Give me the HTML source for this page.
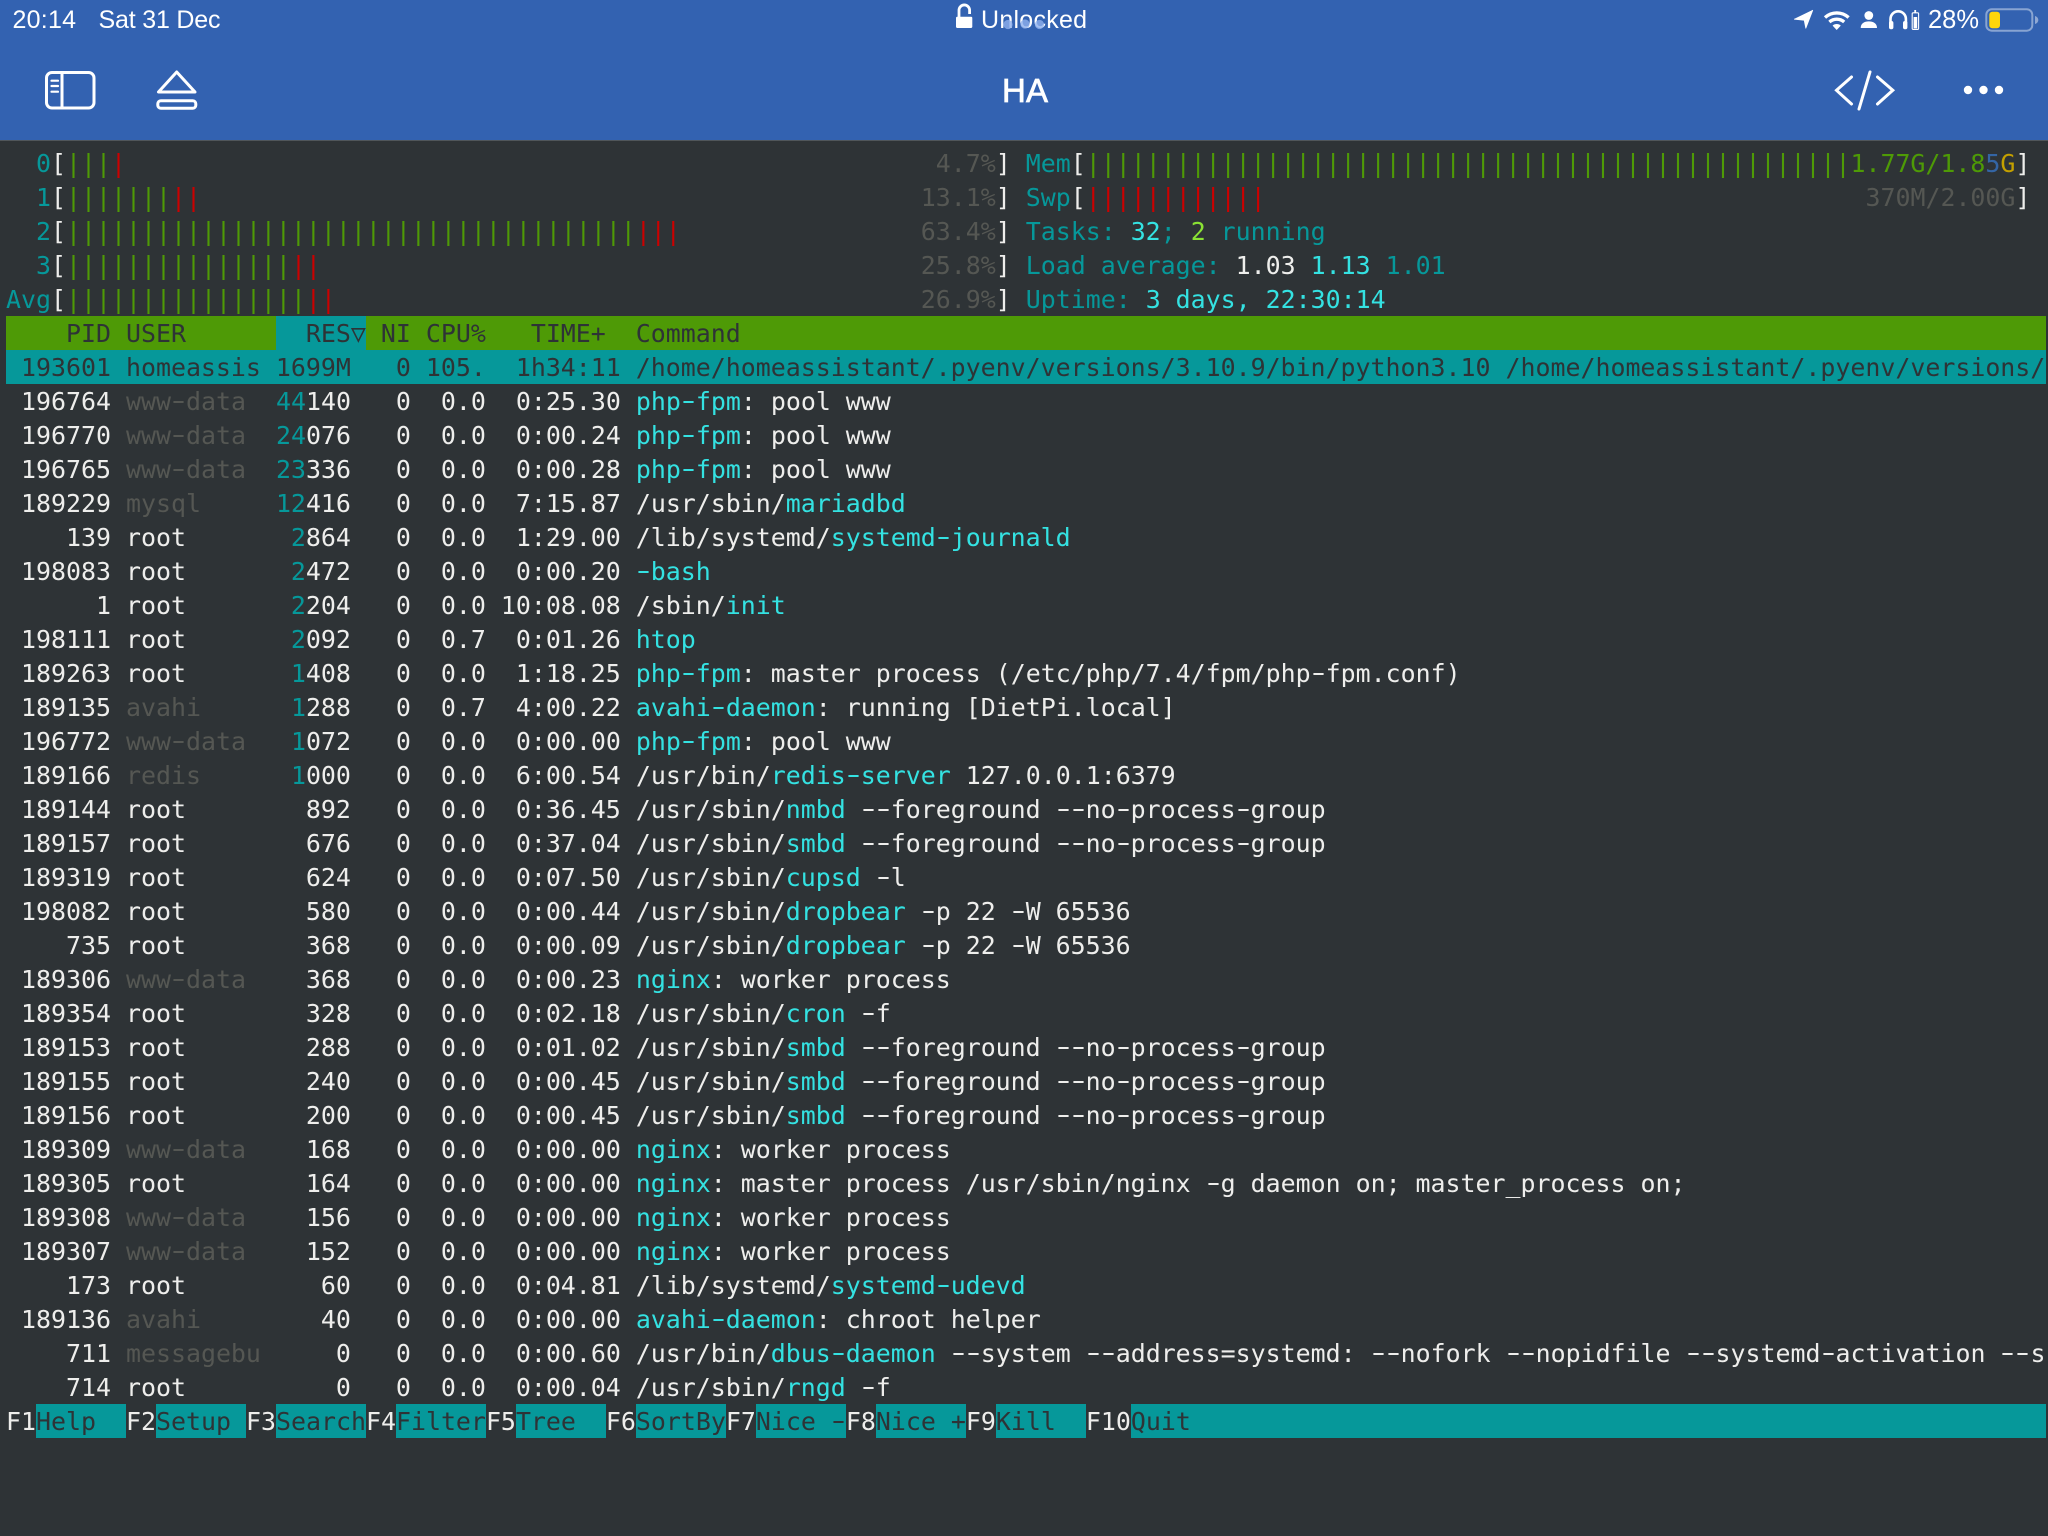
<!DOCTYPE html>
<html lang="en"><head><meta charset="utf-8"><title>HA</title>
<style>
html,body{margin:0;padding:0;background:#2e3336;width:2048px;height:1536px;overflow:hidden}
#bar{position:absolute;left:0;top:0;width:2048px;height:140px;background:#3362b1;border-bottom:1px solid #50565a}
svg{position:absolute;left:0;top:0}
pre{position:absolute;left:6px;top:147px;width:2040px;height:1292px;margin:0;overflow:hidden;color:#eeeeec;
font:24.92px/34px "DejaVu Sans Mono",monospace;white-space:pre;font-variant-ligatures:none}
i{font-style:normal}
u{text-decoration:none;display:inline-block;transform:translateY(-1px) scaleX(1.6)}
.t{color:#06989a}.c{color:#34e2e2}.g{color:#4e9a06}.r{color:#cc0000}.y{color:#555753}.l{color:#8ae234}.b{color:#3465a4}.o{color:#c4a000}
b{font-weight:normal;color:#2e3336}
.k{position:absolute;height:34px;background:#06989a}
.n{background:#4e9a06}
</style></head><body>
<div id="bar"></div>
<div class="k n" style="left:6px;top:316px;width:270px"></div>
<div class="k" style="left:276px;top:316px;width:90px"></div>
<div class="k n" style="left:366px;top:316px;width:1680px"></div>
<div class="k" style="left:6px;top:350px;width:2040px"></div>
<div class="k" style="left:36px;top:1404px;width:90px"></div>
<div class="k" style="left:156px;top:1404px;width:90px"></div>
<div class="k" style="left:276px;top:1404px;width:90px"></div>
<div class="k" style="left:396px;top:1404px;width:90px"></div>
<div class="k" style="left:516px;top:1404px;width:90px"></div>
<div class="k" style="left:636px;top:1404px;width:90px"></div>
<div class="k" style="left:756px;top:1404px;width:90px"></div>
<div class="k" style="left:876px;top:1404px;width:90px"></div>
<div class="k" style="left:996px;top:1404px;width:90px"></div>
<div class="k" style="left:1131px;top:1404px;width:915px"></div>
<pre>  <i class="t">0</i>[<i class="g">|||</i><i class="r">|</i>                                                      <i class="y">4.7%</i>] <i class="t">Mem</i>[<i class="g">|||||||||||||||||||||||||||||||||||||||||||||||||||1.77G/1.8</i><i class="b">5</i><i class="o">G</i>]
  <i class="t">1</i>[<i class="g">|||||||</i><i class="r">||</i>                                                <i class="y">13.1%</i>] <i class="t">Swp</i>[<i class="r">||||||||||||</i>                                        <i class="y">370M/2.00G</i>]
  <i class="t">2</i>[<i class="g">||||||||||||||||||||||||||||||||||||||</i><i class="r">|||</i>                <i class="y">63.4%</i>] <i class="t">Tasks: </i><i class="c">32</i><i class="t">;</i> <i class="l">2</i><i class="t"> running</i>
  <i class="t">3</i>[<i class="g">|||||||||||||||</i><i class="r">||</i>                                        <i class="y">25.8%</i>] <i class="t">Load average: </i>1.03 <i class="c">1.13</i> <i class="t">1.01</i>
<i class="t">Avg</i>[<i class="g">||||||||||||||||</i><i class="r">||</i>                                       <i class="y">26.9%</i>] <i class="t">Uptime: </i><i class="c">3 days, 22:30:14</i>
<b>    PID USER        RES▽ NI CPU%   TIME+  Command</b>
<b> 193601 homeassis 1699M   0 105.  1h34:11 /home/homeassistant/.pyenv/versions/3.10.9/bin/python3.10 /home/homeassistant/.pyenv/versions/</b>
 196764 <i class="y">www<u>-</u>data</i>  <i class="t">44</i>140   0  0.0  0:25.30 <i class="c">php<u>-</u>fpm</i>: pool www
 196770 <i class="y">www<u>-</u>data</i>  <i class="t">24</i>076   0  0.0  0:00.24 <i class="c">php<u>-</u>fpm</i>: pool www
 196765 <i class="y">www<u>-</u>data</i>  <i class="t">23</i>336   0  0.0  0:00.28 <i class="c">php<u>-</u>fpm</i>: pool www
 189229 <i class="y">mysql</i>     <i class="t">12</i>416   0  0.0  7:15.87 /usr/sbin/<i class="c">mariadbd</i>
    139 root       <i class="t">2</i>864   0  0.0  1:29.00 /lib/systemd/<i class="c">systemd<u>-</u>journald</i>
 198083 root       <i class="t">2</i>472   0  0.0  0:00.20 <i class="c"><u>-</u>bash</i>
      1 root       <i class="t">2</i>204   0  0.0 10:08.08 /sbin/<i class="c">init</i>
 198111 root       <i class="t">2</i>092   0  0.7  0:01.26 <i class="c">htop</i>
 189263 root       <i class="t">1</i>408   0  0.0  1:18.25 <i class="c">php<u>-</u>fpm</i>: master process (/etc/php/7.4/fpm/php<u>-</u>fpm.conf)
 189135 <i class="y">avahi</i>      <i class="t">1</i>288   0  0.7  4:00.22 <i class="c">avahi<u>-</u>daemon</i>: running [DietPi.local]
 196772 <i class="y">www<u>-</u>data</i>   <i class="t">1</i>072   0  0.0  0:00.00 <i class="c">php<u>-</u>fpm</i>: pool www
 189166 <i class="y">redis</i>      <i class="t">1</i>000   0  0.0  6:00.54 /usr/bin/<i class="c">redis<u>-</u>server</i> 127.0.0.1:6379
 189144 root        892   0  0.0  0:36.45 /usr/sbin/<i class="c">nmbd</i> <u>-</u><u>-</u>foreground <u>-</u><u>-</u>no<u>-</u>process<u>-</u>group
 189157 root        676   0  0.0  0:37.04 /usr/sbin/<i class="c">smbd</i> <u>-</u><u>-</u>foreground <u>-</u><u>-</u>no<u>-</u>process<u>-</u>group
 189319 root        624   0  0.0  0:07.50 /usr/sbin/<i class="c">cupsd</i> <u>-</u>l
 198082 root        580   0  0.0  0:00.44 /usr/sbin/<i class="c">dropbear</i> <u>-</u>p 22 <u>-</u>W 65536
    735 root        368   0  0.0  0:00.09 /usr/sbin/<i class="c">dropbear</i> <u>-</u>p 22 <u>-</u>W 65536
 189306 <i class="y">www<u>-</u>data</i>    368   0  0.0  0:00.23 <i class="c">nginx</i>: worker process
 189354 root        328   0  0.0  0:02.18 /usr/sbin/<i class="c">cron</i> <u>-</u>f
 189153 root        288   0  0.0  0:01.02 /usr/sbin/<i class="c">smbd</i> <u>-</u><u>-</u>foreground <u>-</u><u>-</u>no<u>-</u>process<u>-</u>group
 189155 root        240   0  0.0  0:00.45 /usr/sbin/<i class="c">smbd</i> <u>-</u><u>-</u>foreground <u>-</u><u>-</u>no<u>-</u>process<u>-</u>group
 189156 root        200   0  0.0  0:00.45 /usr/sbin/<i class="c">smbd</i> <u>-</u><u>-</u>foreground <u>-</u><u>-</u>no<u>-</u>process<u>-</u>group
 189309 <i class="y">www<u>-</u>data</i>    168   0  0.0  0:00.00 <i class="c">nginx</i>: worker process
 189305 root        164   0  0.0  0:00.00 <i class="c">nginx</i>: master process /usr/sbin/nginx <u>-</u>g daemon on; master_process on;
 189308 <i class="y">www<u>-</u>data</i>    156   0  0.0  0:00.00 <i class="c">nginx</i>: worker process
 189307 <i class="y">www<u>-</u>data</i>    152   0  0.0  0:00.00 <i class="c">nginx</i>: worker process
    173 root         60   0  0.0  0:04.81 /lib/systemd/<i class="c">systemd<u>-</u>udevd</i>
 189136 <i class="y">avahi</i>        40   0  0.0  0:00.00 <i class="c">avahi<u>-</u>daemon</i>: chroot helper
    711 <i class="y">messagebu</i>     0   0  0.0  0:00.60 /usr/bin/<i class="c">dbus<u>-</u>daemon</i> <u>-</u><u>-</u>system <u>-</u><u>-</u>address=systemd: <u>-</u><u>-</u>nofork <u>-</u><u>-</u>nopidfile <u>-</u><u>-</u>systemd<u>-</u>activation <u>-</u><u>-</u>s
    714 root          0   0  0.0  0:00.04 /usr/sbin/<i class="c">rngd</i> <u>-</u>f
F1<b>Help  </b>F2<b>Setup </b>F3<b>Search</b>F4<b>Filter</b>F5<b>Tree  </b>F6<b>SortBy</b>F7<b>Nice <u>-</u></b>F8<b>Nice +</b>F9<b>Kill  </b>F10<b>Quit</b></pre>
<svg width="2048" height="140" viewBox="0 0 2048 140" xmlns="http://www.w3.org/2000/svg" font-family="'Liberation Sans',sans-serif" fill="#fff">
<text x="12.5" y="28" font-size="25" textLength="63.5">20:14</text>
<text x="98.5" y="28" font-size="25" textLength="122">Sat 31 Dec</text>
<text x="981" y="28" font-size="25" textLength="106">Unlocked</text>
<text x="1928" y="28" font-size="25.5" textLength="51">28%</text>
<text x="1002" y="102" font-size="33" stroke="#fff" stroke-width=".7" textLength="46">HA</text>
<!-- lock -->
<rect x="956" y="16.7" width="16.3" height="11.3" rx="1.2"/>
<path d="M959 17V10.2a5.3 5.3 0 0 1 10.6 0V14" fill="none" stroke="#fff" stroke-width="2.8"/>
<!-- page dots -->
<g fill="#8fb0ee" fill-opacity=".8"><circle cx="1008" cy="24.5" r="4.6"/><circle cx="1025" cy="24" r="4.6"/><circle cx="1039.5" cy="24.5" r="4.6"/></g>
<!-- sidebar -->
<g fill="none" stroke="#fff" stroke-linecap="round">
<rect x="46.5" y="72.5" width="47.5" height="35.5" rx="5.5" stroke-width="3"/>
<path d="M62 72.5V108" stroke-width="3"/>
<path d="M51.5 80.7H58M51.5 86H58M51.5 91.7H58" stroke-width="2.2"/>
<!-- eject -->
<path d="M176.7 72L158.5 92H195Z" stroke-width="3" stroke-linejoin="round"/>
<rect x="157.8" y="100.8" width="38" height="7.4" rx="3" stroke-width="3"/>
<!-- code -->
<path d="M1851.5 77L1836.5 90.3L1851.5 104M1877.5 77L1892.8 90.3L1877.5 104" stroke-width="3"/>
<path d="M1870 72L1859 109" stroke-width="3"/>
<!-- wifi -->
<path d="M1825 17.5a17.5 17.5 0 0 1 23.6 0M1829.4 22a11.2 11.2 0 0 1 14.8 0" stroke-width="3.3" stroke-linecap="butt"/>
<!-- headphones -->
<path d="M1890.5 23v-4a7.7 7.7 0 0 1 15.4 0v4" stroke-width="2.6" stroke-linecap="butt"/>
</g>
<g fill="#fff">
<circle cx="1968" cy="90" r="4.2"/><circle cx="1983.5" cy="90" r="4.2"/><circle cx="1999" cy="90" r="4.2"/>
<!-- location -->
<path d="M1812.7 10.3L1794.4 19.2L1804.2 20.2L1805.8 28.2Z" stroke="#fff" stroke-width=".8" stroke-linejoin="round"/>
<!-- wifi dot -->
<path d="M1832.6 25.6a6 6 0 0 1 8.2 0L1836.7 30Z"/>
<!-- person -->
<circle cx="1868.8" cy="15.5" r="4.4"/>
<path d="M1860.7 28c0-4.6 3.6-6.6 8.1-6.6s8.2 2 8.2 6.6Z"/>
<!-- ear cups -->
<rect x="1889" y="21" width="4.4" height="8.2" rx="2"/><rect x="1903" y="21" width="4.4" height="8.2" rx="2"/>
<!-- small battery -->
<rect x="1914.3" y="10" width="1.8" height="2.6"/>
<rect x="1913.6" y="17" width="3.6" height="11.4"/>
</g>
<rect x="1912.2" y="12.8" width="6.4" height="16.6" rx="1" fill="none" stroke="#fff" stroke-width="1.1"/>
<!-- battery -->
<rect x="1986.3" y="9.3" width="46" height="21.4" rx="5.5" fill="none" stroke="#fff" stroke-opacity=".42" stroke-width="2"/>
<rect x="1989.3" y="11.8" width="10.7" height="16.5" rx="3" fill="#ffd60a"/>
<path d="M2035 16c2 .6 3.3 2.2 3.3 4s-1.3 3.4-3.3 4Z" fill="#fff" fill-opacity=".45"/>
</svg>
</body></html>
